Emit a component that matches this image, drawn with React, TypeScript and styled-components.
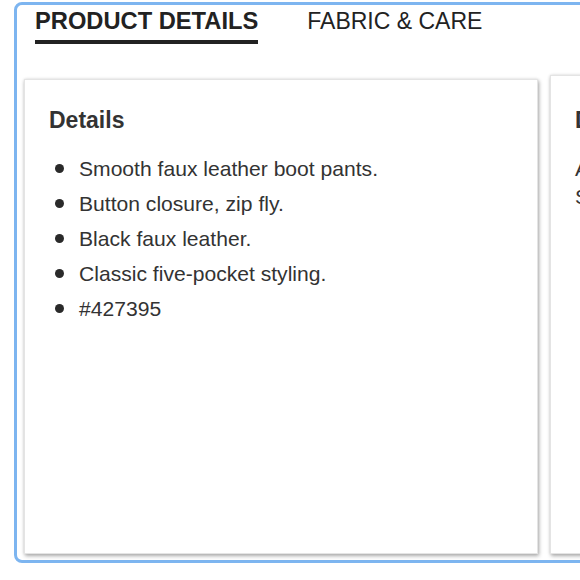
import React from 'react';
import styled, { createGlobalStyle } from 'styled-components';

const GlobalStyle = createGlobalStyle`
  html, body {
    margin: 0;
    padding: 0;
    overflow: hidden;
    background: #ffffff;
    font-family: "Liberation Sans", Arial, sans-serif;
  }
`;

const Page = styled.div`
  padding: 2px 0 0 14px;
  width: 580px;
  height: 580px;
  box-sizing: border-box;
  overflow: hidden;
`;

const Frame = styled.div`
  width: 640px;
  height: 561px;
  box-sizing: border-box;
  border: 3px solid #7db5f0;
  border-radius: 8px;
  padding: 0 0 6px 7px;
  display: flex;
  flex-direction: column;
  background: #ffffff;
`;

const Tabs = styled.div`
  display: flex;
  gap: 49px;
  padding: 2.5px 0 0 11px;
  margin-bottom: 35px;
`;

const Tab = styled.div<{ $active?: boolean }>`
  font-size: ${p => (p.$active ? 23.7 : 23)}px;
  line-height: 27px;
  font-weight: ${p => (p.$active ? 700 : 400)};
  color: #222222;
  padding-bottom: 5.5px;
  border-bottom: 4px solid ${p => (p.$active ? '#222222' : 'transparent')};
  white-space: nowrap;
`;

const Cards = styled.div`
  display: flex;
  gap: 12px;
  flex: 1;
`;

const Card = styled.div<{ $lift?: number }>`
  flex: 0 0 514px;
  box-sizing: border-box;
  margin-top: ${p => -(p.$lift || 0)}px;
  border: 1px solid #e4e4e4;
  background: #ffffff;
  box-shadow: 1px 2px 4px rgba(0, 0, 0, 0.32), 0 0 3px rgba(0, 0, 0, 0.1);
  padding: ${p => 26 + (p.$lift || 0)}px 24px 24px 24px;
  color: #333333;
`;

const CardTitle = styled.h3`
  margin: 0 0 17px;
  font-size: 23px;
  line-height: 28px;
  font-weight: 700;
  color: #333333;
`;

const List = styled.ul`
  list-style: none;
  margin: 0;
  padding: 0 0 0 6px;
`;

const Item = styled.li`
  display: flex;
  align-items: center;
  gap: 15px;
  font-size: 21.1px;
  line-height: 35px;
  color: #333333;

  &::before {
    content: '';
    flex: 0 0 9px;
    height: 9px;
    border-radius: 50%;
    background: #2a2a2a;
  }
`;

const Text = styled.p`
  margin: 0;
  font-size: 21px;
  line-height: 28px;
  color: #333333;
  padding-top: 4px;
`;

const details = [
  'Smooth faux leather boot pants.',
  'Button closure, zip fly.',
  'Black faux leather.',
  'Classic five-pocket styling.',
  '#427395',
];

const App = () => {
  return (
    <>
      <GlobalStyle />
      <Page>
        <Frame>
          <Tabs>
            <Tab $active>PRODUCT DETAILS</Tab>
            <Tab>FABRIC &amp; CARE</Tab>
          </Tabs>
          <Cards>
            <Card>
              <CardTitle>Details</CardTitle>
              <List>
                {details.map((d, i) => (
                  <Item key={i}>{d}</Item>
                ))}
              </List>
            </Card>
            <Card $lift={4}>
              <CardTitle>Description</CardTitle>
              <Text>
                A sleek pair of faux leather boot pants.
                <br />
                Slim through the hip and thigh.
              </Text>
            </Card>
          </Cards>
        </Frame>
      </Page>
    </>
  );
};

export default App;
